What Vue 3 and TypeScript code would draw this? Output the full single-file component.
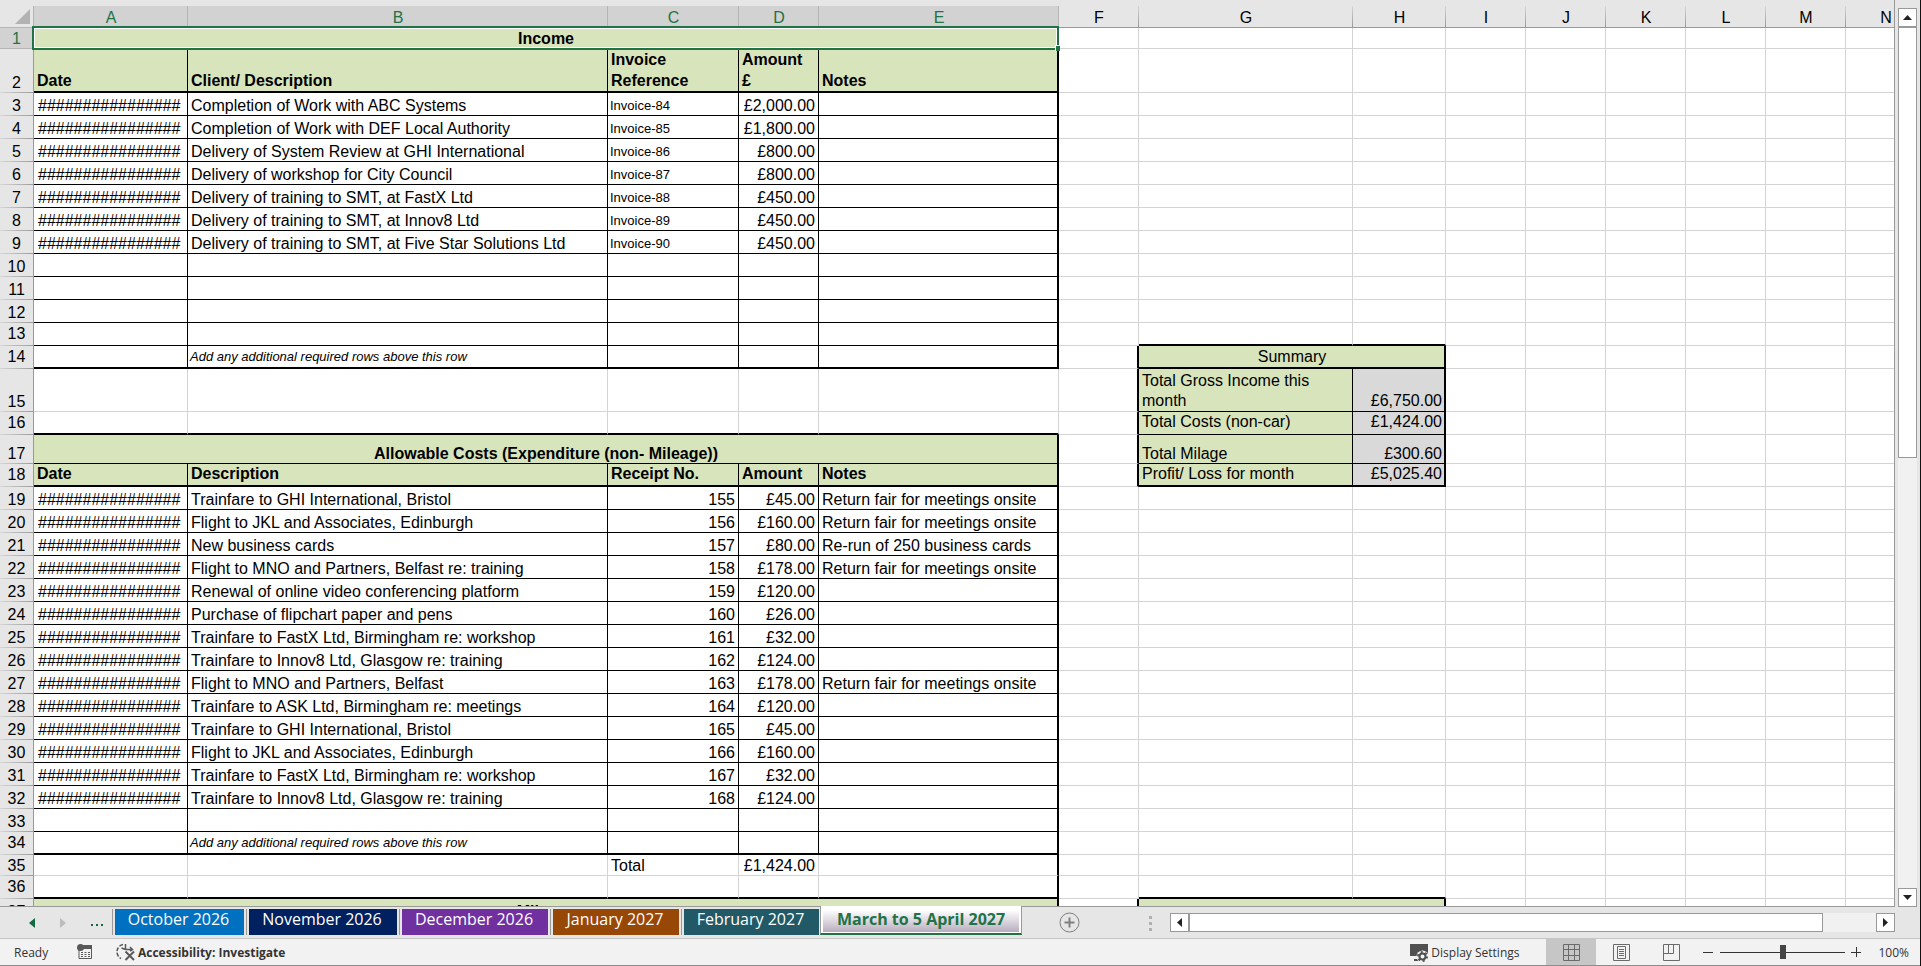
<script setup lang="ts">
import { ref } from 'vue'

interface Cell { text: string; span: number; cls: string[] }
interface Row { n: number; height: number; cls: string; cells: Cell[] }

const columns = [
  { name: 'A', width: 154 }, { name: 'B', width: 420 }, { name: 'C', width: 131 },
  { name: 'D', width: 80 }, { name: 'E', width: 240 }, { name: 'F', width: 80 },
  { name: 'G', width: 214 }, { name: 'H', width: 93 }, { name: 'I', width: 80 },
  { name: 'J', width: 80 }, { name: 'K', width: 80 }, { name: 'L', width: 80 },
  { name: 'M', width: 80 }, { name: 'N', width: 80 },
]
const headWidth = 34
const tableWidth = columns.reduce((sum, c) => sum + c.width, headWidth)

const heights: Record<number, number> = { 1: 21, 2: 44, 15: 43, 17: 29, 35: 21 }
const rowStyles: Record<number, string> = {
  2: 'double', 13: 'raised', 14: 'raised', 15: 'tall', 16: 'raised high',
  18: 'raised high', 34: 'raised', 36: 'raised',
}

const hashes = '#'.repeat(16)
const addRows = 'Add any additional required rows above this row'
const onsite = 'Return fair for meetings onsite'

const content: Record<number, string[]> = {
  1: ['Income'],
  2: ['Date', 'Client/ Description', 'Invoice\nReference', 'Amount\n£', 'Notes'],
  3: [hashes, 'Completion of Work with ABC Systems', 'Invoice-84', '£2,000.00'],
  4: [hashes, 'Completion of Work with DEF Local Authority', 'Invoice-85', '£1,800.00'],
  5: [hashes, 'Delivery of System Review at GHI International', 'Invoice-86', '£800.00'],
  6: [hashes, 'Delivery of workshop for City Council', 'Invoice-87', '£800.00'],
  7: [hashes, 'Delivery of training to SMT, at FastX Ltd', 'Invoice-88', '£450.00'],
  8: [hashes, 'Delivery of training to SMT, at Innov8 Ltd', 'Invoice-89', '£450.00'],
  9: [hashes, 'Delivery of training to SMT, at Five Star Solutions Ltd', 'Invoice-90', '£450.00'],
  14: ['', addRows],
  17: ['Allowable Costs (Expenditure (non- Mileage))'],
  18: ['Date', 'Description', 'Receipt No.', 'Amount', 'Notes'],
  19: [hashes, 'Trainfare to GHI International, Bristol', '155', '£45.00', onsite],
  20: [hashes, 'Flight to JKL and Associates, Edinburgh', '156', '£160.00', onsite],
  21: [hashes, 'New business cards', '157', '£80.00', 'Re-run of 250 business cards'],
  22: [hashes, 'Flight to MNO and Partners, Belfast re: training', '158', '£178.00', onsite],
  23: [hashes, 'Renewal of online video conferencing platform', '159', '£120.00'],
  24: [hashes, 'Purchase of flipchart paper and pens', '160', '£26.00'],
  25: [hashes, 'Trainfare to FastX Ltd, Birmingham re: workshop', '161', '£32.00'],
  26: [hashes, 'Trainfare to Innov8 Ltd, Glasgow re: training', '162', '£124.00'],
  27: [hashes, 'Flight to MNO and Partners, Belfast', '163', '£178.00', onsite],
  28: [hashes, 'Trainfare to ASK Ltd, Birmingham re: meetings', '164', '£120.00'],
  29: [hashes, 'Trainfare to GHI International, Bristol', '165', '£45.00'],
  30: [hashes, 'Flight to JKL and Associates, Edinburgh', '166', '£160.00'],
  31: [hashes, 'Trainfare to FastX Ltd, Birmingham re: workshop', '167', '£32.00'],
  32: [hashes, 'Trainfare to Innov8 Ltd, Glasgow re: training', '168', '£124.00'],
  34: ['', addRows],
  35: ['', '', 'Total', '£1,424.00'],
  37: ['Mileage'],
}

const summary: Record<number, [string, string]> = {
  14: ['Summary', ''],
  15: ['Total Gross Income this\nmonth', '£6,750.00'],
  16: ['Total Costs (non-car)', '£1,424.00'],
  17: ['Total Milage', '£300.60'],
  18: ['Profit/ Loss for month', '£5,025.40'],
  37: ['', ''],
}

const bannerRows = [1, 17, 37]
const headingRows = [2, 18]
const thickBottom = [2, 14, 16, 18, 34, 36]

function inTable(r: number): boolean {
  return (r >= 1 && r <= 14) || (r >= 17 && r <= 34) || r === 37
}

function ledgerClasses(r: number, c: number): string[] {
  const cls: string[] = []
  if (inTable(r)) cls.push('ruled')
  if (thickBottom.includes(r)) cls.push('thick-bottom')
  if (c === 4 && r !== 15 && r !== 16) cls.push('thick-right')
  if (bannerRows.includes(r)) cls.push('green', 'bold', 'center')
  if (headingRows.includes(r)) cls.push('green', 'bold')
  else if (c === 0) cls.push('hashes')
  else if (c === 3 || (c === 2 && r >= 19 && r <= 32)) cls.push('right')
  if (c === 2 && r >= 3 && r <= 9) cls.push('small')
  if (c === 1 && (r === 14 || r === 34)) cls.push('small', 'italic')
  return cls
}

function buildRow(r: number): Row {
  const cells: Cell[] = []
  const text = content[r] ?? []
  if (bannerRows.includes(r)) {
    const cls = ledgerClasses(r, 4)
    cells.push({ text: text[0], span: 5, cls: r === 1 ? [...cls, 'selected'] : cls })
  } else {
    for (let c = 0; c < 5; c++) cells.push({ text: text[c] ?? '', span: 1, cls: ledgerClasses(r, c) })
  }

  const box = summary[r]
  cells.push({ text: '', span: 1, cls: box ? ['thick-right'] : [] })
  if (box && (r === 14 || r === 37)) {
    cells.push({ text: box[0], span: 2, cls: ['ruled', 'green', 'center', 'thick-right', 'thick-bottom'] })
  } else {
    const base = box ? ['ruled'] : []
    if (r === 13 || r === 18 || r === 36) base.push('thick-bottom')
    cells.push({ text: box?.[0] ?? '', span: 1, cls: box ? [...base, 'green'] : base })
    cells.push({ text: box?.[1] ?? '', span: 1, cls: box ? [...base, 'grey', 'right', 'thick-right'] : base })
  }
  for (let c = 8; c < columns.length; c++) cells.push({ text: '', span: 1, cls: [] })
  return { n: r, height: heights[r] ?? 23, cls: rowStyles[r] ?? '', cells }
}

const rows: Row[] = Array.from({ length: 37 }, (_, i) => buildRow(i + 1))

const tabs = [
  { label: 'October 2026', cls: 'oct' },
  { label: 'November 2026', cls: 'nov' },
  { label: 'December 2026', cls: 'dec' },
  { label: 'January 2027', cls: 'jan' },
  { label: 'February 2027', cls: 'feb' },
  { label: 'March to 5 April 2027', cls: 'active' },
]
const zoom = ref(50)
</script>

<template>
  <div class="app">
    <main class="workspace">
      <div class="sheet">
        <table :style="{ width: tableWidth + 'px' }">
          <colgroup>
            <col :style="{ width: headWidth + 'px' }" />
            <col v-for="c in columns" :key="c.name" :style="{ width: c.width + 'px' }" />
          </colgroup>
          <thead>
            <tr>
              <th class="corner" aria-label="Select all">
                <svg width="15" height="15" viewBox="0 0 15 15"><path d="M15 0V15H0Z" fill="#b2b2b2" /></svg>
              </th>
              <th v-for="(c, i) in columns" :key="c.name" scope="col" class="col-head" :class="{ chosen: i < 5 }">{{ c.name }}</th>
            </tr>
          </thead>
          <tbody>
            <tr v-for="row in rows" :key="row.n" :class="row.cls" :style="{ height: row.height + 'px' }">
              <th scope="row" class="row-head" :class="{ chosen: row.n === 1 }">{{ row.n }}</th>
              <td v-for="(cell, i) in row.cells" :key="i" :colspan="cell.span" :class="cell.cls">{{ cell.text }}</td>
            </tr>
          </tbody>
        </table>
      </div>
      <div class="vscroll">
        <button class="scroll-btn" aria-label="Scroll up"><svg width="9" height="5" viewBox="0 0 9 5"><path d="M4.500 0L9 5H0Z" /></svg></button>
        <div class="vtrack"><div class="vthumb"></div></div>
        <button class="scroll-btn" aria-label="Scroll down"><svg width="9" height="5" viewBox="0 0 9 5"><path d="M0 0H9L4.500 5Z" /></svg></button>
      </div>
    </main>

    <nav class="tabbar" aria-label="Sheets">
      <div class="tab-nav">
        <button class="plain" aria-label="Previous sheet"><svg width="6" height="10" viewBox="0 0 6 10"><path d="M6 0V10L0 5Z" fill="#0e6b3b" /></svg></button>
        <button class="plain" aria-label="Next sheet" disabled><svg width="6" height="10" viewBox="0 0 6 10"><path d="M0 0V10L6 5Z" fill="#bdbdbd" /></svg></button>
        <button class="plain more" aria-label="More sheets"><svg width="12" height="2" viewBox="0 0 12 2"><path d="M0 0H2V2H0ZM5 0H7V2H5ZM10 0H12V2H10Z" fill="#0e6b3b" /></svg></button>
      </div>
      <button v-for="t in tabs" :key="t.label" class="tab" :class="t.cls">{{ t.label }}</button>
      <button class="plain add" aria-label="New sheet">
        <svg width="21" height="21" viewBox="0 0 21 21" fill="none" stroke="#808080"><circle cx="10.500" cy="10.500" r="9.500" /><path d="M10.500 5.500V15.500M5.500 10.500H15.500" stroke-width="2" /></svg>
      </button>
      <div class="grip"><i></i><i></i><i></i></div>
      <div class="hscroll">
        <button class="scroll-btn" aria-label="Scroll left"><svg width="5" height="9" viewBox="0 0 5 9"><path d="M5 0V9L0 4.500Z" /></svg></button>
        <div class="hthumb"></div>
        <div class="htrack"></div>
        <button class="scroll-btn" aria-label="Scroll right"><svg width="5" height="9" viewBox="0 0 5 9"><path d="M0 0V9L5 4.500Z" /></svg></button>
      </div>
    </nav>

    <footer class="status">
      <span class="ready">Ready</span>
      <button class="plain macro" aria-label="Record macro">
        <svg width="16" height="16" viewBox="0 0 16 16"><path d="M2 4V14.500H14.500V1.500H7" fill="none" stroke="#595959" /><path d="M6 1H15V5H6Z" fill="#595959" /><circle cx="3.500" cy="3.500" r="3.500" fill="#595959" /><path d="M4 8.500H13M4 10.500H13M4 12.500H13" stroke="#595959" stroke-dasharray="2 1.500" /></svg>
      </button>
      <button class="plain access">
        <svg width="20" height="18" viewBox="0 0 20 18" fill="none" stroke="#595959"><path d="M7 1.500A7.500 7.500 0 0 0 5 15.500" stroke-width="1.500" stroke-dasharray="4 1.500" /><path d="M9.500 1V6M5.500 5L9.500 6.500M9.500 6.500H16M14 4L16.500 6.500L14 8" stroke-width="1.500" /><path d="M9.500 8.500L18 17M18 8.500L9.500 17" stroke-width="2" /></svg>
        <span>Accessibility: Investigate</span>
      </button>
      <button class="plain display">
        <svg width="20" height="19" viewBox="0 0 20 19"><path d="M1 1H19V13H1ZM5 16H10V18H5Z" fill="#505050" /><circle cx="13.500" cy="13.500" r="6" fill="#f2f2f2" /><circle cx="13.500" cy="13.500" r="3" fill="none" stroke="#505050" stroke-width="2" /><circle cx="13.500" cy="13.500" r="4.500" fill="none" stroke="#505050" stroke-width="2" stroke-dasharray="2 2.700" /></svg>
        <span>Display Settings</span>
      </button>
      <div class="views">
        <button class="view on" aria-label="Normal"><svg width="17" height="17" viewBox="0 0 17 17" fill="none" stroke="#6a6a6a"><path d="M.5 .5H16.500V16.500H.5ZM5.500 .5V16.500M11.500 .5V16.500M.5 5.500H16.500M.5 11.500H16.500" /></svg></button>
        <button class="view" aria-label="Page Layout"><svg width="17" height="17" viewBox="0 0 17 17" fill="none" stroke="#6a6a6a"><path d="M.5 .5H16.500V16.500H.5ZM4.500 2.500H12.500V14.500H4.500ZM6 5.500H11M6 7.500H11M6 9.500H11M6 11.500H11" /></svg></button>
        <button class="view" aria-label="Page Break Preview"><svg width="17" height="17" viewBox="0 0 17 17" fill="none" stroke="#6a6a6a"><path d="M.5 .5H16.500V16.500H.5ZM5.500 .5V9.500M10.500 .5V9.500M.5 9.500H10.500" /></svg></button>
      </div>
      <div class="zoom">
        <button class="plain" aria-label="Zoom out"><svg width="11" height="11" viewBox="0 0 11 11"><path d="M0 5.500H10" stroke="#333" /></svg></button>
        <input v-model="zoom" type="range" min="0" max="100" aria-label="Zoom" />
        <button class="plain" aria-label="Zoom in"><svg width="11" height="11" viewBox="0 0 11 11"><path d="M0 5.500H10M5.500 0V10" stroke="#333" /></svg></button>
        <span class="percent">100%</span>
      </div>
    </footer>
  </div>
</template>

<style>
html, body { margin: 0; }
</style>

<style scoped>
.app {
  box-sizing: border-box;
  height: 100vh;
  display: flex;
  flex-direction: column;
  overflow: hidden;
  background: #e6e6e6;
  border-right: 1px solid #111;
  font-family: "Open Sans", "Noto Sans", sans-serif;
}
button { font: inherit; }
.workspace { flex: 1; min-height: 0; display: flex; gap: 3px; padding-right: 3px; }
.sheet {
  flex: 1;
  min-width: 0;
  padding-top: 6px;
  overflow: hidden;
  border-right: 1px solid #999;
  border-bottom: 1px solid #999;
  box-sizing: border-box;
  font-family: "Liberation Sans", Arial, sans-serif;
}
table { table-layout: fixed; border-collapse: separate; border-spacing: 0; }
th, td {
  box-sizing: border-box;
  padding: 0 2px 0 3px;
  font-size: 16px;
  line-height: 18px;
  font-weight: 400;
  color: #000;
  vertical-align: bottom;
  white-space: pre;
}
td {
  background: #fff;
  border-right: 1px solid #d4d4d4;
  border-bottom: 1px solid #d4d4d4;
  text-align: left;
}
.corner { text-align: right; vertical-align: middle; line-height: 0; padding: 0 3px 0 0; border-bottom: 1px solid #b5b5b5; border-right: 1px solid #b5b5b5; }
.col-head {
  height: 22px;
  padding: 0;
  text-align: center;
  border-bottom: 1px solid #999;
  background: linear-gradient(#d6d6d6, #999) right / 1px 100% no-repeat #e6e6e6;
}
.col-head.chosen { color: #217346; background: linear-gradient(#b5b5b5, #b5b5b5) right / 1px 100% no-repeat #d2d2d2; }
.row-head {
  padding: 0;
  text-align: center;
  border-right: 1px solid #999;
  background: linear-gradient(90deg, #d6d6d6, #999) bottom / 100% 1px no-repeat #e6e6e6;
  border-bottom: 1px solid transparent;
  background-origin: border-box;
}
.row-head.chosen { color: #217346; background: #d2d2d2; border-bottom-color: #b5b5b5; }
.ruled { border-color: #000; }
.thick-bottom { border-bottom: 2px solid #000; }
.thick-right { border-right: 2px solid #000; }
.green { background: #d8e4bc; }
.grey { background: #d9d9d9; }
.bold { font-weight: 700; }
.center { text-align: center; }
.right { text-align: right; padding-right: 3px; }
.right.thick-right { padding-right: 2px; }
.hashes { padding-left: 4px; }
.italic { font-style: italic; }
.small { font-size: 13px; padding-left: 2px; }
.double td { line-height: 21px; }
.tall td { line-height: 20px; }
.raised td { padding-bottom: 1px; line-height: 21px; }
.raised th { padding-bottom: 2px; }
.raised td.thick-bottom { padding-bottom: 0; }
.high td { padding-bottom: 3px; line-height: 19px; }
.high td.thick-bottom { padding-bottom: 2px; }
.selected { position: relative; }
.selected::before {
  content: "";
  position: absolute;
  inset: -2px;
  border: 2px solid #217346;
  box-shadow: inset 0 0 0 1px #fff;
  z-index: 1;
}
.selected::after {
  content: "";
  position: absolute;
  right: -3px;
  bottom: -3px;
  width: 4px;
  height: 5px;
  background: #217346;
  border: solid #fff;
  border-width: 1px 0 0 1px;
  z-index: 2;
}

.scroll-btn {
  box-sizing: border-box;
  width: 19px;
  height: 19px;
  flex: none;
  padding: 0;
  display: flex;
  align-items: center;
  justify-content: center;
  background: #fff;
  border: 1px solid #999;
}
.scroll-btn svg { fill: #222; }
.vscroll { display: flex; flex-direction: column; padding-top: 8px; width: 19px; }
.vtrack { flex: 1; background: #f1f1f1; }
.vthumb { box-sizing: border-box; height: 50%; background: #fff; border: 1px solid #999; }

.plain { padding: 0; border: 0; background: none; color: inherit; display: flex; align-items: center; }
.tabbar {
  flex: none;
  height: 31px;
  display: flex;
  align-items: flex-start;
  padding-right: 25px;
  border-bottom: 1px solid #c6c6c6;
}
.tab-nav { box-sizing: border-box; width: 112px; height: 31px; display: flex; align-items: center; justify-content: space-between; padding: 0 9px 0 29px; flex: none; }
.more { padding-top: 5px; }
.tab {
  flex: none;
  box-sizing: border-box;
  height: 26px;
  margin: 2px 2px 0 0;
  padding: 0 0 5px;
  border: 0;
  border-left: 1px solid #999;
  box-shadow: inset 2px 0 #e6e6e6;
  color: #fff;
  font-size: 16px;
  line-height: 21px;
  white-space: nowrap;
}
.oct { width: 132px; background: #0070c0; }
.nov { width: 151px; background: #002060; }
.dec { width: 149px; background: #7030a0; }
.jan { width: 129px; background: #974706; }
.feb { width: 138px; background: #215967; margin-right: 1px; }
.active {
  width: 202px;
  height: 29px;
  margin: -1px 0 0;
  padding-bottom: 1px;
  color: #217346;
  font-weight: 700;
  background: linear-gradient(#fff 15%, #b8aebe) 2px 0 / 196px 26px no-repeat #fff;
  border: solid #999;
  border-width: 0 1px 2px;
  border-bottom-color: #217346;
  box-shadow: none;
}
.add { margin: 5px 0 0 37px; }
.grip { margin: 9px 18px 0 auto; display: flex; flex-direction: column; gap: 3px; }
.grip i { width: 3px; height: 3px; background: #b0b0b0; }
.hscroll { flex: 0 1 725px; min-width: 100px; display: flex; margin-top: 6px; }
.htrack { flex: 1; background: #f1f1f1; }
.hthumb { flex: 12; box-sizing: border-box; height: 19px; background: #fff; border: 1px solid #999; }

.status {
  flex: none;
  height: 26px;
  display: flex;
  align-items: center;
  background: #f2f2f2;
  border-bottom: 1px solid #8c8c8c;
  color: #333;
  font-size: 12px;
  padding-right: 11px;
}
.ready { width: 63px; padding-left: 14px; }
.macro { margin-right: 23px; }
.access { gap: 2px; font-weight: 700; }
.display { margin-left: auto; gap: 2px; }
.views { display: flex; margin-left: 27px; height: 26px; }
.view { width: 50px; padding: 0; border: 0; background: none; display: flex; align-items: center; justify-content: center; }
.view.on { background: #c6c6c6; }
.zoom { display: flex; align-items: center; margin-left: 7px; }
.zoom input { appearance: none; width: 125px; height: 15px; margin: 0 6px; background: linear-gradient(#333, #333) center / 100% 1px no-repeat; }
.zoom input::-webkit-slider-thumb { appearance: none; width: 6px; height: 14px; background: #444; border: 0; border-radius: 0; }
.percent { margin-left: 16px; }
</style>
